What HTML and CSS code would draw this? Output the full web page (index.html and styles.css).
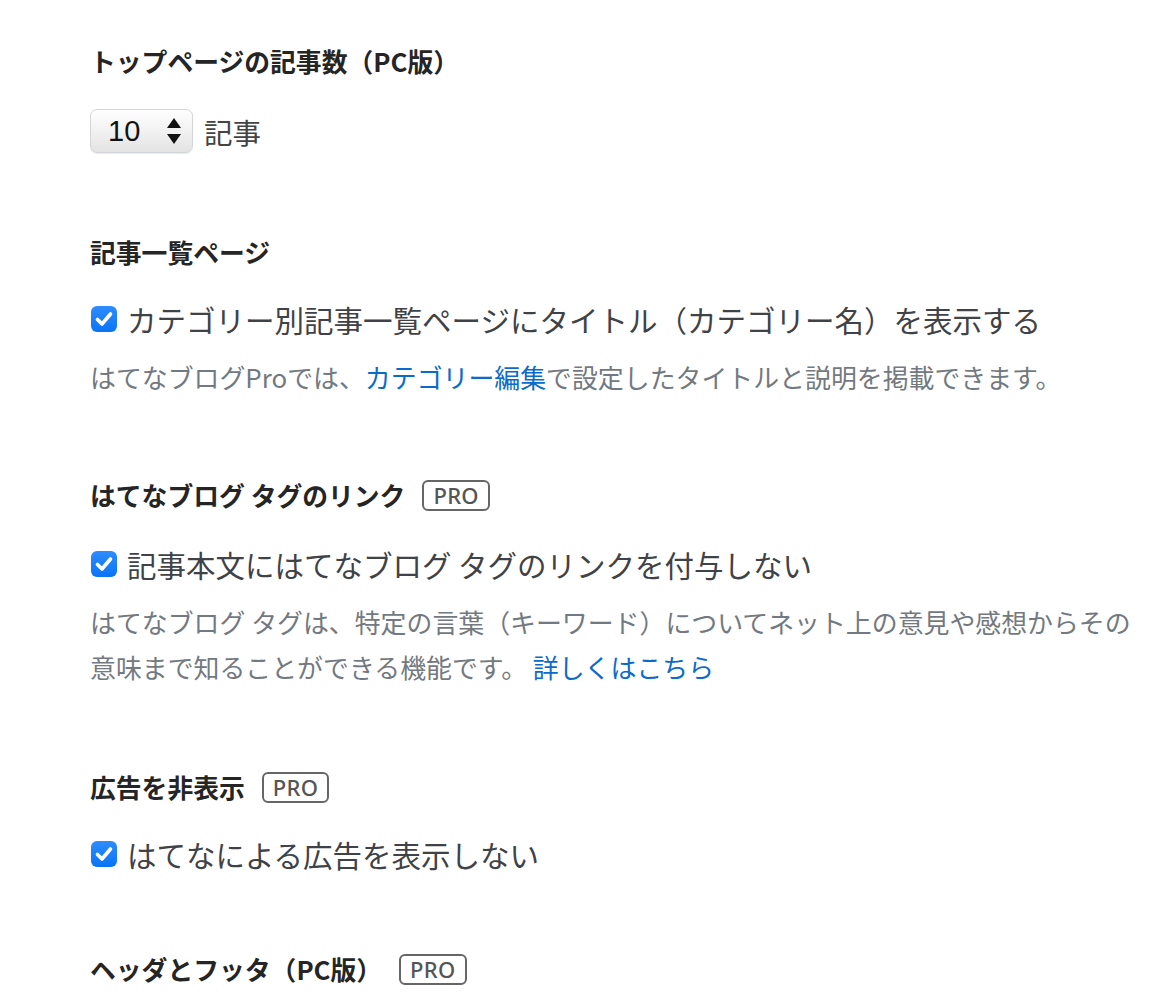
FILE: index.html
```html
<!DOCTYPE html>
<html lang="ja">
<head>
<meta charset="utf-8">
<title>設定</title>
<link rel="stylesheet" href="styles.css">
</head>
<body>
<main class="settings">
  <section class="section section--select">
    <h3 class="heading">トップページの記事数（PC版）</h3>
    <div class="row">
      <span class="select">
        <span class="select-value">10</span>
        <svg class="select-arrows" width="16" height="30" viewBox="0 0 16 30"><path d="M8 2 L15 12 H1 Z" fill="#111"/><path d="M8 28 L15 18 H1 Z" fill="#111"/></svg>
      </span>
      <span class="unit">記事</span>
    </div>
  </section>

  <section class="section">
    <h3 class="heading">記事一覧ページ</h3>
    <label class="row check">
      <span class="checkbox"><svg width="26" height="26" viewBox="0 0 26 26"><path d="M6.5 13.5 L11 18 L19.5 8" fill="none" stroke="#fff" stroke-width="3.6" stroke-linecap="round" stroke-linejoin="round"/></svg></span>
      <span class="label">カテゴリー別記事一覧ページにタイトル（カテゴリー名）を表示する</span>
    </label>
    <p class="note">はてなブログProでは、<a class="link" href="#">カテゴリー編集</a>で設定したタイトルと説明を掲載できます。</p>
  </section>

  <section class="section section--long">
    <h3 class="heading">はてなブログ タグのリンク<span class="pro">PRO</span></h3>
    <label class="row check check--low">
      <span class="checkbox"><svg width="26" height="26" viewBox="0 0 26 26"><path d="M6.5 13.5 L11 18 L19.5 8" fill="none" stroke="#fff" stroke-width="3.6" stroke-linecap="round" stroke-linejoin="round"/></svg></span>
      <span class="label">記事本文にはてなブログ タグのリンクを付与しない</span>
    </label>
    <p class="note">はてなブログ タグは、特定の言葉（キーワード）についてネット上の意見や感想からその意味まで知ることができる機能です。 <a class="link" href="#">詳しくはこちら</a></p>
  </section>

  <section class="section section--short">
    <h3 class="heading">広告を非表示<span class="pro">PRO</span></h3>
    <label class="row check">
      <span class="checkbox"><svg width="26" height="26" viewBox="0 0 26 26"><path d="M6.5 13.5 L11 18 L19.5 8" fill="none" stroke="#fff" stroke-width="3.6" stroke-linecap="round" stroke-linejoin="round"/></svg></span>
      <span class="label">はてなによる広告を表示しない</span>
    </label>
  </section>

  <section class="section">
    <h3 class="heading">ヘッダとフッタ（PC版）<span class="pro">PRO</span></h3>
  </section>
</main>
</body>
</html>
```

FILE: styles.css
```css
html, body {
  margin: 0;
  padding: 0;
  background: #ffffff;
}

body {
  font-family: "Noto Sans CJK JP", "Noto Sans", sans-serif;
  color: #3e4145;
  overflow: hidden;
}

.settings {
  padding: 43px 0 0 90px;
  width: 1055px;
}

.section {
  margin: 0 0 78px 0;
}

.section--select {
  margin-bottom: 81px;
}

.section--long {
  margin-bottom: 80px;
}

.section--short {
  margin-bottom: 75px;
}

.heading {
  margin: 0 0 30px 0;
  height: 36px;
  line-height: 36px;
  font-size: 25.8px;
  font-weight: 700;
  color: #252525;
  display: flex;
  align-items: center;
  white-space: nowrap;
}

.pro {
  display: inline-flex;
  align-items: center;
  justify-content: center;
  box-sizing: border-box;
  height: 31px;
  padding: 0 9px;
  margin-left: 17px;
  border: 2px solid #666;
  border-radius: 6px;
  font-family: "Noto Sans", "Noto Sans CJK JP", sans-serif;
  font-size: 22px;
  font-weight: 500;
  color: #555;
  line-height: 1;
  letter-spacing: 0.3px;
}

.row {
  display: flex;
  align-items: center;
  height: 44px;
}

.select {
  box-sizing: border-box;
  width: 103px;
  height: 44px;
  display: flex;
  align-items: center;
  justify-content: space-between;
  padding: 0 10px 0 17px;
  border: 1px solid #d3d6d9;
  border-radius: 7px;
  background: linear-gradient(#ffffff 0%, #f4f4f4 40%, #e3e3e3 100%);
  box-shadow: 0 1px 1px rgba(0,0,0,0.08), inset 0 1px 0 #fff;
}

.select-value {
  font-family: "Liberation Sans", Arial, sans-serif;
  font-size: 29px;
  color: #111;
}

.unit {
  margin-left: 11px;
  font-size: 28.5px;
  color: #444;
}

.check {
  cursor: pointer;
  margin-top: -3px;
}

.check--low {
  margin-top: -1px;
}

.checkbox {
  width: 26px;
  height: 26px;
  margin-left: 1px;
  border-radius: 6px;
  background: linear-gradient(#2e8cff, #0a74f5);
  display: inline-flex;
  flex-shrink: 0;
}

.checkbox svg {
  display: block;
}

.label {
  margin-left: 10px;
  font-size: 29.5px;
  color: #3f4246;
  white-space: nowrap;
}

.note {
  margin: 13px 0 0 0;
  font-size: 25.9px;
  line-height: 45px;
  color: #737980;
}

.link {
  color: #0b6bcb;
  text-decoration: none;
}
```
